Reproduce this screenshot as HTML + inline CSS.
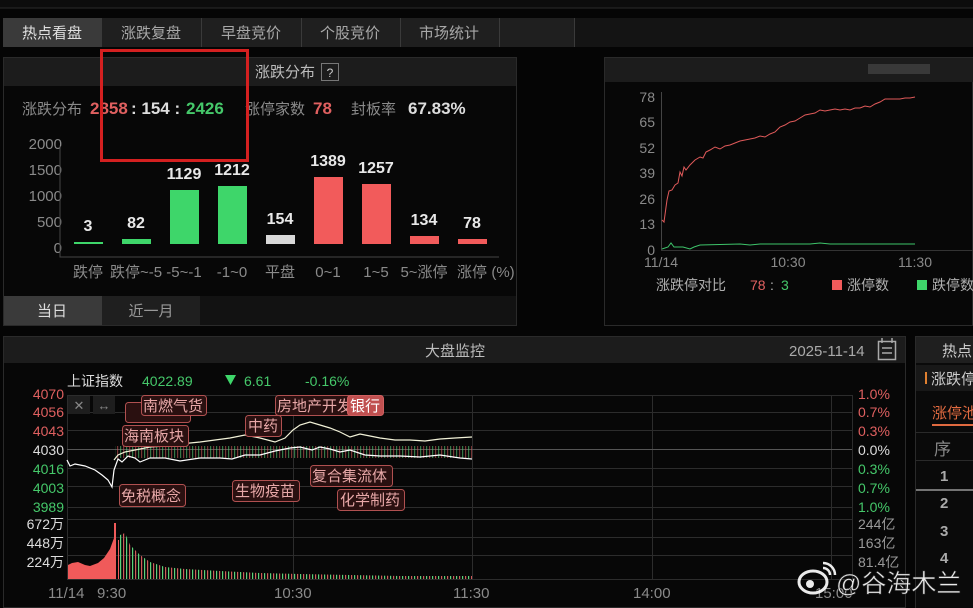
<!DOCTYPE html>
<html><head><meta charset="utf-8"><style>
html,body{margin:0;padding:0;background:#000;width:973px;height:608px;overflow:hidden}
svg{display:block}
text{font-family:"Liberation Sans","Noto Sans CJK SC",sans-serif}
</style></head><body>
<svg width="973" height="608" viewBox="0 0 973 608" xmlns="http://www.w3.org/2000/svg">
<defs>
<pattern id="vg" width="6" height="10" patternUnits="userSpaceOnUse"><rect x="0" y="0" width="1.2" height="10" fill="#5ad27a"/><rect x="3" y="0" width="1.2" height="10" fill="#d05a5a"/></pattern>
</defs>
<rect width="973" height="608" fill="#050505"/>
<rect x="0" y="0" width="973" height="8" fill="#0c0c0c"/>
<line x1="0" y1="8" x2="973" y2="8" stroke="#2a2a2a"/>
<rect x="3" y="18" width="99" height="29" fill="#3a3a3a"/>
<rect x="102" y="18" width="472" height="29" fill="#1f1f1f"/>
<rect x="574" y="18" width="399" height="29" fill="#141414"/>
<g stroke="#3a3a3a"><line x1="201.5" y1="18" x2="201.5" y2="47"/><line x1="301.5" y1="18" x2="301.5" y2="47"/><line x1="400.5" y1="18" x2="400.5" y2="47"/><line x1="499.5" y1="18" x2="499.5" y2="47"/><line x1="574.5" y1="18" x2="574.5" y2="47"/></g>
<g font-size="15" text-anchor="middle" fill="#a8a8a8">
<text x="52" y="38" fill="#e0e0e0">热点看盘</text><text x="151" y="38">涨跌复盘</text><text x="251" y="38">早盘竞价</text><text x="350" y="38">个股竞价</text><text x="449" y="38">市场统计</text></g>

<rect x="3.5" y="57.5" width="513" height="268" fill="#070707" stroke="#2a2a2a"/>
<rect x="4" y="58" width="512" height="28" fill="#1c1c1c"/>
<text x="255" y="77" font-size="15" fill="#bdbdbd">涨跌分布</text>
<rect x="321.5" y="63.5" width="17" height="17" fill="none" stroke="#777"/>
<text x="330" y="77" font-size="12" fill="#ccc" text-anchor="middle">?</text>
<text x="22" y="114" font-size="15" fill="#8a8a8a">涨跌分布</text>
<text x="90" y="114" font-size="17" font-weight="bold" fill="#e06060">2858</text>
<text x="131" y="114" font-size="17" font-weight="bold" fill="#ddd">: 154 :</text>
<text x="186" y="114" font-size="17" font-weight="bold" fill="#45c86a">2426</text>
<text x="245" y="114" font-size="15" fill="#8a8a8a">涨停家数</text>
<text x="313" y="114" font-size="17" font-weight="bold" fill="#e06060">78</text>
<text x="351" y="114" font-size="15" fill="#8a8a8a">封板率</text>
<text x="408" y="114" font-size="17" font-weight="bold" fill="#ddd">67.83%</text>
<g font-size="15" fill="#8a8a8a" text-anchor="end"><text x="62" y="149">2000</text><text x="62" y="175">1500</text><text x="62" y="201">1000</text><text x="62" y="227">500</text><text x="62" y="253">0</text></g>
<path d="M60 146V257H499" stroke="#444" fill="none"/>
<g>
<rect x="74" y="242" width="29" height="2" fill="#3ed66a"/>
<rect x="122" y="239" width="29" height="5" fill="#3ed66a"/>
<rect x="170" y="190" width="29" height="54" fill="#3ed66a"/>
<rect x="218" y="186" width="29" height="58" fill="#3ed66a"/>
<rect x="266" y="235" width="29" height="9" fill="#d8d8d8"/>
<rect x="314" y="177" width="29" height="67" fill="#f25b5b"/>
<rect x="362" y="184" width="29" height="60" fill="#f25b5b"/>
<rect x="410" y="236" width="29" height="8" fill="#f25b5b"/>
<rect x="458" y="239" width="29" height="5" fill="#f25b5b"/>
</g>
<g font-size="16" font-weight="bold" fill="#e8e8e8" text-anchor="middle">
<text x="88" y="231">3</text><text x="136" y="228">82</text><text x="184" y="179">1129</text><text x="232" y="175">1212</text><text x="280" y="224">154</text><text x="328" y="166">1389</text><text x="376" y="173">1257</text><text x="424" y="225">134</text><text x="472" y="228">78</text></g>
<g font-size="15" fill="#8a8a8a" text-anchor="middle">
<text x="88" y="277">跌停</text><text x="136" y="277">跌停~-5</text><text x="184" y="277">-5~-1</text><text x="232" y="277">-1~0</text><text x="280" y="277">平盘</text><text x="328" y="277">0~1</text><text x="376" y="277">1~5</text><text x="424" y="277">5~涨停</text><text x="472" y="277">涨停</text><text x="503" y="277">(%)</text></g>
<rect x="4" y="296" width="98" height="29" fill="#3a3a3a"/>
<rect x="102" y="296" width="98" height="29" fill="#1f1f1f"/>
<rect x="200" y="296" width="316" height="29" fill="#121212"/>
<text x="52" y="316" font-size="15" fill="#ddd" text-anchor="middle">当日</text>
<text x="151" y="316" font-size="15" fill="#999" text-anchor="middle">近一月</text>

<rect x="101.5" y="50.5" width="146" height="110" fill="none" stroke="#d42020" stroke-width="3"/>

<rect x="604.5" y="57.5" width="368" height="268" fill="#070707" stroke="#2a2a2a"/>
<rect x="605" y="58" width="368" height="24" fill="#1c1c1c"/>
<rect x="868" y="64" width="62" height="10" fill="#555" opacity=".5"/>
<g font-size="14" fill="#8a8a8a" text-anchor="end"><text x="655" y="102">78</text><text x="655" y="127">65</text><text x="655" y="153">52</text><text x="655" y="178">39</text><text x="655" y="204">26</text><text x="655" y="229">13</text><text x="655" y="255">0</text></g>
<line x1="661.5" y1="92" x2="661.5" y2="250" stroke="#444"/>
<line x1="661" y1="250.5" x2="973" y2="250.5" stroke="#333"/>
<polyline fill="none" stroke="#e05a5a" stroke-width="1" points="662,220 664,222 667,200 669,191 672,190 675,185 678,183 680,172 682,176 684,167 686,170 690,165 695,160 700,157 703,158 706,152 710,150 715,147 720,149 725,146 730,145 735,143 740,141 745,140 750,139 755,138 760,136 765,137 770,134 775,132 780,127 785,125 790,122 795,121 800,118 805,115 810,114 815,113 820,110 825,111 830,110 835,109 840,110 845,109 850,110 855,108 860,108 865,106 870,107 875,104 880,102 885,99 890,99 895,99 900,99 905,98 910,98 915,97"/>
<polyline fill="none" stroke="#3ec46a" stroke-width="1" points="662,249 668,247 671,243 674,247 683,247 690,249 694,247 700,245 740,244 750,245 760,244 810,244 820,243 830,244 915,244"/>
<g font-size="14" fill="#8a8a8a" text-anchor="middle"><text x="661" y="267">11/14</text><text x="788" y="267">10:30</text><text x="915" y="267">11:30</text></g>
<text x="656" y="290" font-size="14" fill="#b0b0b0">涨跌停对比</text>
<text x="750" y="290" font-size="14" fill="#e06060">78</text><text x="770" y="290" font-size="14" fill="#bbb">:</text><text x="781" y="290" font-size="14" fill="#45c86a">3</text>
<rect x="832" y="280" width="10" height="10" fill="#f25b5b"/><text x="847" y="290" font-size="14" fill="#b0b0b0">涨停数</text>
<rect x="917" y="280" width="10" height="10" fill="#3ed66a"/><text x="932" y="290" font-size="14" fill="#b0b0b0">跌停数</text>

<rect x="3.5" y="336.5" width="902" height="271" fill="#070707" stroke="#2a2a2a"/>
<rect x="4" y="337" width="901" height="26" fill="#1c1c1c"/>
<text x="455" y="356" font-size="15" fill="#bdbdbd" text-anchor="middle">大盘监控</text>
<text x="789" y="356" font-size="15" fill="#aaa">2025-11-14</text>
<rect x="878.5" y="341.5" width="17" height="18" fill="none" stroke="#aaa" stroke-width="1.5"/>
<path d="M882 338v5M892 338v5M882 348h10M882 353h10" stroke="#aaa" stroke-width="1.5"/>
<g stroke="#2c2c2c">
<line x1="67" y1="395.5" x2="852" y2="395.5"/><line x1="67" y1="412.5" x2="852" y2="412.5"/><line x1="67" y1="430.5" x2="852" y2="430.5"/><line x1="67" y1="468.5" x2="852" y2="468.5"/><line x1="67" y1="486.5" x2="852" y2="486.5"/><line x1="67" y1="507.5" x2="852" y2="507.5"/>
<line x1="67" y1="519.5" x2="852" y2="519.5"/><line x1="67" y1="537.5" x2="852" y2="537.5"/><line x1="67" y1="555.5" x2="852" y2="555.5"/><line x1="67" y1="579.5" x2="852" y2="579.5"/>
<line x1="67.5" y1="395" x2="67.5" y2="580"/><line x1="293.5" y1="395" x2="293.5" y2="580"/><line x1="472.5" y1="395" x2="472.5" y2="580"/><line x1="652.5" y1="395" x2="652.5" y2="580"/><line x1="831.5" y1="395" x2="831.5" y2="580"/><line x1="852.5" y1="395" x2="852.5" y2="580"/>
</g>
<line x1="67" y1="449.5" x2="852" y2="449.5" stroke="#555"/>
<text x="67" y="386" font-size="14" fill="#ddd">上证指数</text>
<text x="142" y="386" font-size="14" fill="#45c86a">4022.89</text>
<path d="M225 375h11l-5.5 10z" fill="#3ed66a"/>
<text x="244" y="386" font-size="14" fill="#45c86a">6.61</text>
<text x="305" y="386" font-size="14" fill="#45c86a">-0.16%</text>
<g font-size="14" text-anchor="end"><text x="64" y="399" fill="#e06060">4070</text><text x="64" y="417" fill="#e06060">4056</text><text x="64" y="436" fill="#e06060">4043</text><text x="64" y="455" fill="#ddd">4030</text><text x="64" y="474" fill="#45c86a">4016</text><text x="64" y="493" fill="#45c86a">4003</text><text x="64" y="512" fill="#45c86a">3989</text>
<text x="64" y="529" fill="#ddd">672万</text><text x="64" y="548" fill="#ddd">448万</text><text x="64" y="567" fill="#ddd">224万</text></g>
<g font-size="14"><text x="858" y="399" fill="#e06060">1.0%</text><text x="858" y="417" fill="#e06060">0.7%</text><text x="858" y="436" fill="#e06060">0.3%</text><text x="858" y="455" fill="#ddd">0.0%</text><text x="858" y="474" fill="#45c86a">0.3%</text><text x="858" y="493" fill="#45c86a">0.7%</text><text x="858" y="512" fill="#45c86a">1.0%</text>
<text x="858" y="529" fill="#999">244亿</text><text x="858" y="548" fill="#999">163亿</text><text x="858" y="567" fill="#999">81.4亿</text></g>
<rect x="68" y="396" width="22" height="18" fill="#1e1e1e"/><text x="79" y="410" font-size="13" fill="#888" text-anchor="middle">✕</text>
<rect x="93" y="396" width="22" height="18" fill="#1e1e1e"/><text x="104" y="410" font-size="13" fill="#888" text-anchor="middle">↔</text>
<rect x="115" y="446" width="357" height="12" fill="url(#vg)" opacity=".55"/>
<polyline fill="none" stroke="#f2f2d8" stroke-width="1.2" points="114,460 118,455 125,452 135,450 150,447 165,446 180,444 200,442 215,440 230,438 245,435 260,438 275,442 285,438 293,430 300,425 310,422 320,425 330,428 340,432 350,437 360,434 370,436 380,438 395,440 410,440 425,441 440,439 455,438 472,437"/>
<polyline fill="none" stroke="#ffffff" stroke-width="1.2" points="67,460 70,466 75,464 85,466 95,470 102,475 108,480 112,487 114,470 118,459 122,462 128,456 135,458 140,462 150,458 165,458 180,461 200,458 220,458 232,459 245,455 260,455 275,451 290,448 300,447 312,450 320,447 330,449 340,452 350,450 365,455 380,456 400,456 420,457 440,455 460,458 472,459"/>
<g font-size="15" fill="#e8a8a8">
<rect x="125.5" y="402.5" width="65" height="20" rx="3" fill="#2a1010" stroke="#b05050"/>
<rect x="141.5" y="395.5" width="65" height="20" rx="3" fill="#2a1010" stroke="#b05050"/>
<text x="143" y="411">南燃气货</text>
<rect x="122.5" y="425.5" width="66" height="21" rx="3" fill="#2a1010" stroke="#b05050"/><text x="124" y="441">海南板块</text>
<rect x="119.5" y="484.5" width="66" height="22" rx="3" fill="#2a1010" stroke="#b05050"/><text x="121" y="501">免税概念</text>
<rect x="245.5" y="415.5" width="36" height="21" rx="3" fill="#2a1010" stroke="#b05050"/><text x="248" y="431">中药</text>
<rect x="275.5" y="395.5" width="76" height="20" rx="3" fill="#2a1010" stroke="#b05050"/><text x="277" y="411">房地产开发</text>
<rect x="347.5" y="395.5" width="36" height="20" rx="3" fill="#c05050" stroke="#d06060"/><text x="350" y="411" fill="#fff">银行</text>
<rect x="232.5" y="480.5" width="67" height="21" rx="3" fill="#2a1010" stroke="#b05050"/><text x="235" y="496">生物疫苗</text>
<rect x="310.5" y="465.5" width="82" height="21" rx="3" fill="#2a1010" stroke="#b05050"/><text x="312" y="481">复合集流体</text>
<rect x="337.5" y="489.5" width="67" height="21" rx="3" fill="#2a1010" stroke="#b05050"/><text x="340" y="505">化学制药</text>
</g>
<path d="M68 579V565L72 563L78 562L85 565L90 566L98 563L104 558L110 549L114 538V579Z" fill="#f05a5a"/>
<path d="M114 579V523h2V579ZM118 579V540h1V579Z" fill="#f05a5a"/>
<path d="M120 579V535L125 533L130 545L140 555L150 562L165 567L185 569L220 571L260 573L300 574L350 575L400 576L472 576V579Z" fill="url(#vg)"/>
<g font-size="15" fill="#8a8a8a"><text x="48" y="598">11/14</text><text x="97" y="598">9:30</text><text x="274" y="598">10:30</text><text x="453" y="598">11:30</text><text x="633" y="598">14:00</text><text x="815" y="598">15:00</text></g>

<rect x="915.5" y="336.5" width="58" height="272" fill="#0a0a0a" stroke="#2a2a2a"/>
<rect x="916" y="337" width="57" height="26" fill="#1f1f1f"/>
<text x="942" y="356" font-size="15" fill="#ccc">热点</text>
<rect x="916" y="365" width="57" height="26" fill="#181818"/>
<rect x="925" y="372" width="2" height="12" fill="#e08030"/>
<text x="931" y="384" font-size="15" fill="#ccc">涨跌停</text>
<text x="932" y="418" font-size="15" fill="#e06a40">涨停池</text>
<rect x="932" y="424" width="41" height="2" fill="#e06a40"/>
<line x1="916" y1="432.5" x2="973" y2="432.5" stroke="#2a2a2a"/>
<text x="934" y="455" font-size="17" fill="#888">序</text>
<line x1="916" y1="460.5" x2="973" y2="460.5" stroke="#2a2a2a"/>
<g font-size="15" font-weight="bold" fill="#aaa"><text x="940" y="481">1</text><text x="940" y="508">2</text><text x="940" y="536">3</text><text x="940" y="563">4</text></g>
<line x1="916" y1="490" x2="973" y2="490" stroke="#ddd"/>

<g opacity=".92">
<ellipse cx="813" cy="582" rx="14" ry="11" fill="none" stroke="#fff" stroke-width="3"/>
<circle cx="810" cy="584" r="4" fill="#fff"/>
<path d="M823 568a7 7 0 0 1 7 7M823 563a12 12 0 0 1 12 12" stroke="#fff" stroke-width="2.5" fill="none"/>
<text x="836" y="592" font-size="25" fill="#fff" stroke="#333" stroke-width=".6">@谷海木兰</text>
</g>
</svg>
</body></html>
